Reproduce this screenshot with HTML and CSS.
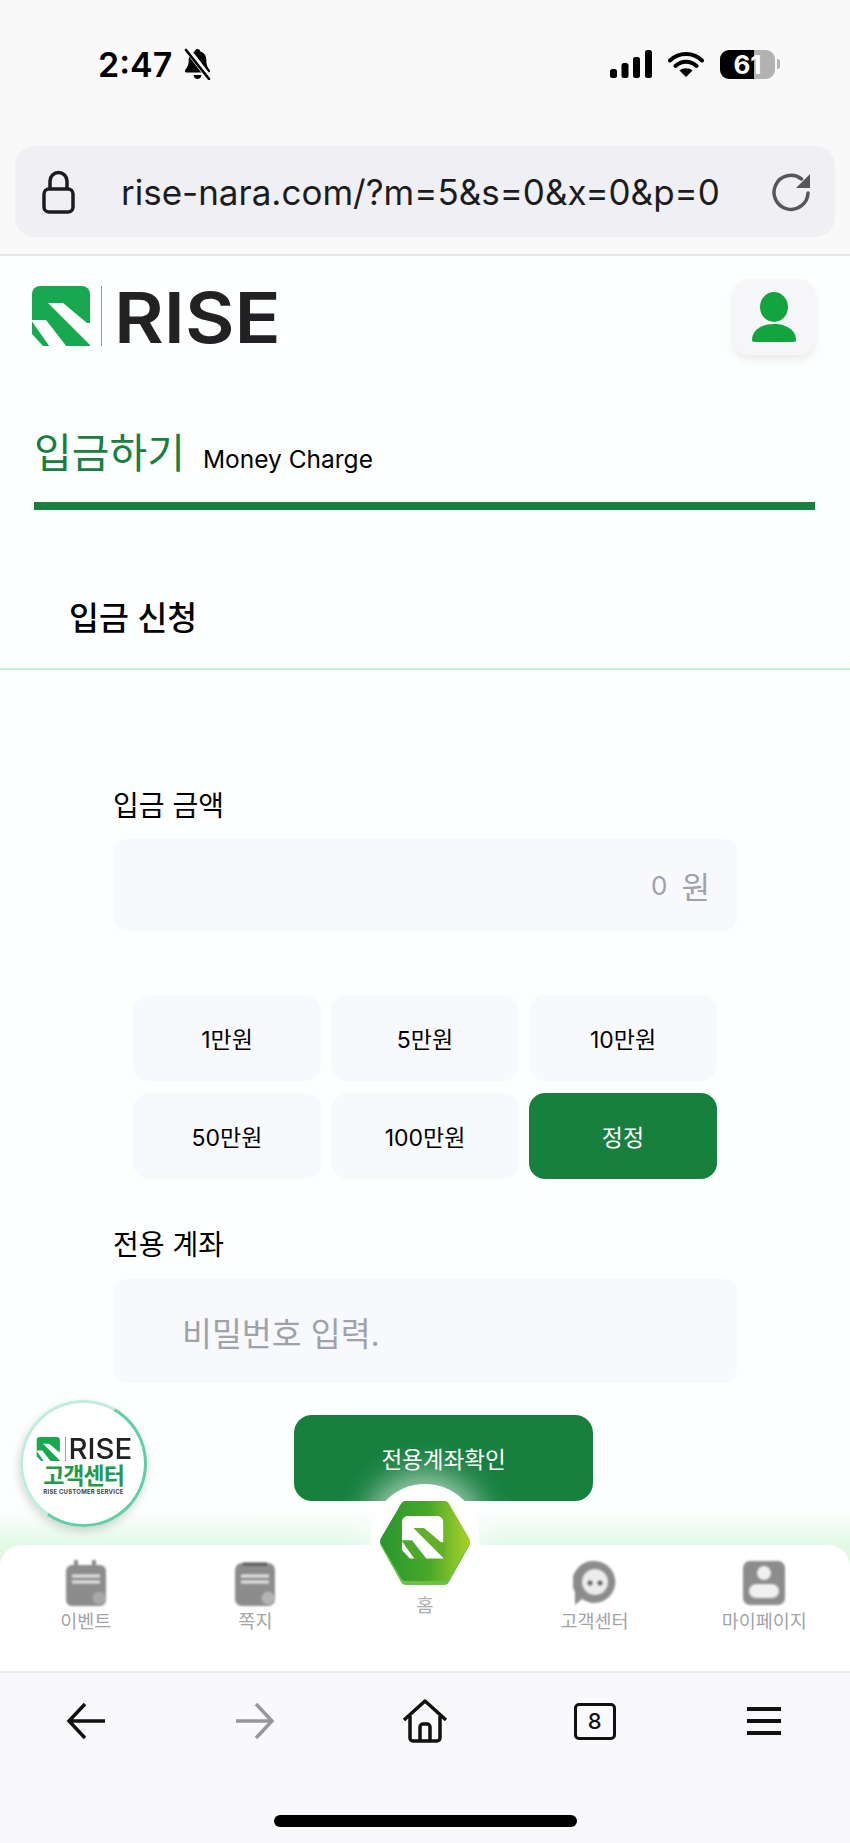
FILE: index.html
```html
<!DOCTYPE html>
<html lang="ko">
<head>
  <meta charset="UTF-8" />
  <meta name="viewport" content="width=device-width, initial-scale=1" />
  <title>입금하기</title>
  <link rel="stylesheet" href="styles.css">
</head>
<body>

  <!-- 브라우저 상단 -->
  <div class="browser-top">
    <div class="status-row">
      <div class="status-left">
        <span class="clock">2:47</span>
        <svg class="bell" width="29" height="32" viewBox="0 0 29 32">
          <path d="M14.5 1c1.6 0 2.6 1 2.8 2.4 4 1.1 6 4.4 6 8.6 0 5.200 1.400 7.500 3.400 10 .9 1.100.3 2.500-1.200 2.500H3.500c-1.500 0-2.100-1.400-1.200-2.500 2-2.500 3.400-4.800 3.400-10 0-4.200 2-7.500 6-8.600C11.900 2 12.900 1 14.500 1z" fill="#000"/>
          <path d="M10.500 27h8c-.3 2.400-2 4-4 4s-3.700-1.600-4-4z" fill="#000"/>
          <path d="M4 1l23 30" stroke="#f9f9fa" stroke-width="6"/>
          <path d="M3 2l23 29" stroke="#000" stroke-width="2.600" stroke-linecap="round"/>
        </svg>
      </div>
      <div class="status-right">
        <svg width="42" height="28" viewBox="0 0 42 28" fill="#000">
          <rect x="0" y="19" width="7" height="9" rx="2.500"/>
          <rect x="11.500" y="13" width="7" height="15" rx="2.500"/>
          <rect x="23" y="7" width="7" height="21" rx="2.500"/>
          <rect x="35" y="0" width="7" height="28" rx="2.500"/>
        </svg>
        <svg width="36" height="26" viewBox="0 0 36 26">
          <path d="M2 9.500c9-8.600 23-8.600 32 0M7.500 15c6-5.600 15-5.600 21 0" fill="none" stroke="#000" stroke-width="4" stroke-linecap="round"/>
          <path d="M18 26l-6.500-6.500c3.600-3 9.400-3 13 0z" fill="#000"/>
        </svg>
        <div class="battery">
          <div class="battery-body"><span class="battery-level">61</span></div>
          <div class="battery-nub"></div>
        </div>
      </div>
    </div>

    <div class="url-bar">
      <svg width="33" height="44" viewBox="0 0 33 44" fill="none" stroke="#1c1c1e" stroke-width="3.500">
        <rect x="2" y="19" width="29" height="23" rx="5"/>
        <path d="M8 19v-8a8.500 8.500 0 0 1 17 0v8"/>
      </svg>
      <span class="url-text">rise-nara.com/?m=5&amp;s=0&amp;x=0&amp;p=0</span>
      <svg width="41" height="41" viewBox="0 0 41 41">
        <path d="M37 22a17 17 0 1 1-6.500-14" fill="none" stroke="#56565a" stroke-width="3.500" stroke-linecap="round"/>
        <path d="M39 3v14H25z" fill="#56565a"/>
      </svg>
    </div>
  </div>

  <!-- 페이지 -->
  <div class="page">
    <header class="site-header">
      <div class="logo">
        <svg class="logo-mark" width="59" height="60" viewBox="0 0 59 60">
          <path d="M8 0H50a8 8 0 0 1 8 8V60H11L0 48V8a8 8 0 0 1 8-8z" fill="#18a84f"/>
          <polygon points="16,17 31,17 55,37 60,37 60,60 59,60" fill="#fff"/>
          <polygon points="-1,34 14,34 35,61 18,61" fill="#fff"/>
        </svg>
        <span class="logo-divider"></span>
        <span class="logo-text">RISE</span>
      </div>
      <div class="profile-btn">
        <svg width="46" height="50" viewBox="0 0 46 50" fill="#12a53f">
          <ellipse cx="23" cy="15" rx="14" ry="15"/>
          <path d="M1 48c0-10 10-16 22-16s22 6 22 16c0 1-1 2-2 2H3c-1 0-2-1-2-2z"/>
        </svg>
      </div>
    </header>

    <div class="page-title">
      <h1>입금하기</h1>
      <span class="page-title-en">Money Charge</span>
    </div>

    <div class="section-head">입금 신청</div>

    <div class="form">
      <div class="form-label">입금 금액</div>
      <div class="amount-input">
        <span class="zero">0</span>
        <span>원</span>
      </div>

      <div class="chips">
        <div class="chip">1만원</div>
        <div class="chip">5만원</div>
        <div class="chip">10만원</div>
        <div class="chip">50만원</div>
        <div class="chip">100만원</div>
        <div class="chip chip-active">정정</div>
      </div>

      <div class="form-label account-label">전용 계좌</div>
      <div class="password-input">비밀번호 입력.</div>

      <div class="confirm-btn">전용계좌확인</div>
    </div>

    <div class="cs-badge">
      <div class="cs-logo">
        <svg width="25" height="24" viewBox="0 0 59 60">
          <path d="M8 0H50a8 8 0 0 1 8 8V60H11L0 48V8a8 8 0 0 1 8-8z" fill="#18a84f"/>
          <polygon points="16,17 31,17 55,37 60,37 60,60 59,60" fill="#fff"/>
          <polygon points="-1,34 14,34 35,61 18,61" fill="#fff"/>
        </svg>
        <span class="cs-divider"></span>
        <span class="cs-rise">RISE</span>
      </div>
      <div class="cs-name">고객센터</div>
      <div class="cs-sub">RISE CUSTOMER SERVICE</div>
    </div>
  </div>

  <!-- 하단 메뉴 -->
  <div class="dock">
    <nav class="nav">
      <div class="nav-item">
        <svg class="nav-icon" width="44" height="46" viewBox="0 0 44 46">
          <path d="M12 0v8M30 0v8" stroke="#8c8c8c" stroke-width="4" stroke-linecap="round"/>
          <rect x="2" y="5" width="40" height="41" rx="6" fill="#8c8c8c"/>
          <path d="M8 16h28M8 22h28" stroke="#e6e6e6" stroke-width="3"/>
          <circle cx="35" cy="38" r="6.500" fill="#a8a8a8"/>
        </svg>
        <span class="nav-label">이벤트</span>
      </div>
      <div class="nav-item">
        <svg class="nav-icon" width="44" height="46" viewBox="0 0 44 46">
          <rect x="2" y="3" width="40" height="43" rx="7" fill="#8c8c8c"/>
          <path d="M10 4h24" stroke="#555" stroke-width="3"/>
          <path d="M8 16h28M8 22h28" stroke="#e6e6e6" stroke-width="3"/>
          <circle cx="35" cy="38" r="6.500" fill="#b4b4b4"/>
        </svg>
        <span class="nav-label">쪽지</span>
      </div>
      <div class="nav-item nav-home">
        <div class="home-bubble">
          <svg width="92" height="88" viewBox="0 0 92 88">
            <defs>
              <linearGradient id="hexFill" x1="0" x2="1" y1="0" y2="0">
                <stop offset="0" stop-color="#27962f"/>
                <stop offset="0.55" stop-color="#4aa82a"/>
                <stop offset="1" stop-color="#aad225"/>
              </linearGradient>
            </defs>
            <path d="M26 2H66a5 5 0 0 1 4 3L90 41a6 6 0 0 1 0 6L70 83a5 5 0 0 1-4 3H26a5 5 0 0 1-4-3L2 47a6 6 0 0 1 0-6L22 5a5 5 0 0 1 4-3z" fill="#6cc04a"/>
            <path d="M26 2H66a5 5 0 0 1 4 3L90 39a6 6 0 0 1 0 6L70 79a5 5 0 0 1-4 3H26a5 5 0 0 1-4-3L2 45a6 6 0 0 1 0-6L22 5a5 5 0 0 1 4-3z" fill="url(#hexFill)"/>
            <g transform="translate(23 17) scale(0.71)">
              <path d="M8 0H50a8 8 0 0 1 8 8V60H11L0 48V8a8 8 0 0 1 8-8z" fill="#fff"/>
              <polygon points="16,17 31,17 55,37 60,37 60,60 59,60" fill="#62b028"/>
              <polygon points="-1,34 14,34 35,61 18,61" fill="#4aa82a"/>
            </g>
          </svg>
        </div>
        <span class="nav-label">홈</span>
      </div>
      <div class="nav-item">
        <svg class="nav-icon" width="44" height="46" viewBox="0 0 44 46">
          <path d="M22 1a21 21 0 1 1-13 38l-7 6v-13A21 21 0 0 1 22 1z" fill="#8c8c8c"/>
          <circle cx="22" cy="22" r="13" fill="#ececec"/>
          <circle cx="17" cy="23" r="2.500" fill="#666"/>
          <circle cx="27" cy="23" r="2.500" fill="#666"/>
        </svg>
        <span class="nav-label">고객센터</span>
      </div>
      <div class="nav-item">
        <svg class="nav-icon" width="44" height="46" viewBox="0 0 44 46">
          <rect x="1" y="1" width="42" height="44" rx="7" fill="#8c8c8c"/>
          <circle cx="22" cy="13" r="7" fill="#f0f0f0"/>
          <rect x="7" y="24" width="30" height="14" rx="7" fill="#f0f0f0"/>
        </svg>
        <span class="nav-label">마이페이지</span>
      </div>
    </nav>
  </div>

  <!-- 브라우저 하단 -->
  <div class="browser-bottom">
    <div class="tool-row">
      <svg width="40" height="40" viewBox="0 0 40 40" fill="none" stroke="#111" stroke-width="3.500">
        <path d="M39 20H3M19 3L3 20l16 17"/>
      </svg>
      <svg width="40" height="40" viewBox="0 0 40 40" fill="none" stroke="#98989c" stroke-width="3.500">
        <path d="M1 20h36M21 3l16 17-16 17"/>
      </svg>
      <svg width="46" height="44" viewBox="0 0 46 44" fill="none" stroke="#111" stroke-width="3.500" stroke-linejoin="round">
        <path d="M2 21L23 2l21 19"/>
        <path d="M8 17v22a3 3 0 0 0 3 3h24a3 3 0 0 0 3-3V17"/>
        <path d="M18 42V28a3 3 0 0 1 3-3h4a3 3 0 0 1 3 3v14"/>
      </svg>
      <div class="tabs-count">8</div>
      <svg width="36" height="30" viewBox="0 0 36 30" fill="#111">
        <rect x="1" y="1" width="34" height="4"/>
        <rect x="1" y="13" width="34" height="4"/>
        <rect x="1" y="25" width="34" height="4"/>
      </svg>
    </div>
    <div class="home-indicator"></div>
  </div>

</body>
</html>
```

FILE: styles.css
```css
* {
  box-sizing: border-box;
}

body {
  margin: 0;
  width: 850px;
  height: 1843px;
  display: flex;
  flex-direction: column;
  overflow: hidden;
  background: #fdfffe;
  color: #000;
  font-family: Inter, "Noto Sans CJK KR", sans-serif;
}

/* browser top */
.browser-top {
  height: 256px;
  background: #f9f9fa;
  border-bottom: 2px solid #e6e6e9;
}

.status-row {
  height: 128px;
  padding: 0 70px 0 98px;
  display: flex;
  align-items: center;
  justify-content: space-between;
}

.status-left {
  display: flex;
  align-items: center;
  gap: 11px;
}

.clock {
  font-size: 34px;
  font-weight: 600;
}

.status-right {
  display: flex;
  align-items: center;
  gap: 16px;
}

.battery {
  display: flex;
  align-items: center;
  gap: 2px;
}

.battery-body {
  width: 55px;
  height: 29px;
  border-radius: 9px;
  background: linear-gradient(90deg, #000 61%, #b2b2b2 61%);
  display: flex;
  align-items: center;
  justify-content: center;
}

.battery-level {
  color: #fff;
  font-size: 26px;
  font-weight: 700;
}

.battery-nub {
  width: 3px;
  height: 10px;
  border-radius: 0 3px 3px 0;
  background: #b2b2b2;
}

.url-bar {
  height: 91px;
  margin: 18px 15px 0;
  padding: 0 23px 0 27px;
  background: #f0f0f4;
  border-radius: 20px;
  display: flex;
  align-items: center;
}

.url-text {
  flex: 1;
  margin-left: 46px;
  font-size: 35px;
  color: #1c1c1e;
}

/* page */
.page {
  position: relative;
  flex: 1;
  min-height: 0;
}

.site-header {
  padding: 23px 35px 0 32px;
  display: flex;
  justify-content: space-between;
  align-items: flex-start;
}

.logo {
  height: 60px;
  margin-top: 7px;
  display: flex;
  align-items: center;
}

.logo-divider {
  width: 1px;
  height: 60px;
  margin: 0 12px 0 10px;
  background: #9a9a9a;
}

.logo-text {
  display: inline-block;
  padding-top: 3px;
  font-size: 70px;
  line-height: 60px;
  font-weight: 600;
  color: #222224;
  transform: scaleX(1.09);
  transform-origin: left center;
}

.profile-btn {
  width: 82px;
  height: 76px;
  background: #f6f6f8;
  border-radius: 16px;
  box-shadow: 0 5px 8px rgba(0, 0, 0, 0.08);
  display: flex;
  align-items: center;
  justify-content: center;
}

.page-title {
  margin: 74px 35px 0 34px;
  padding-bottom: 25px;
  border-bottom: 8px solid #17803f;
  display: flex;
  align-items: baseline;
  gap: 18px;
}

.page-title h1 {
  margin: 0;
  font-size: 41px;
  line-height: 48px;
  font-weight: 400;
  color: #17803f;
}

.page-title-en {
  font-size: 24.500px;
}

.section-head {
  margin-top: 89px;
  padding: 0 0 29px 69px;
  border-bottom: 2px solid #c8f0d4;
  font-size: 32.500px;
  line-height: 40px;
  font-weight: 500;
}

.form {
  width: 624px;
  margin-left: 113px;
  padding-top: 120px;
}

.form-label {
  font-size: 28px;
  line-height: 32px;
}

.amount-input {
  height: 92px;
  margin-top: 17px;
  padding-right: 27px;
  background: #f8f9fd;
  border-radius: 14px;
  color: #a0a2a8;
  font-size: 31px;
  display: flex;
  align-items: center;
  justify-content: flex-end;
  gap: 14px;
}

.zero {
  font-size: 26px;
}

.chips {
  width: 584px;
  margin: 64px 0 0 20px;
  display: grid;
  grid-template-columns: repeat(3, 1fr);
  grid-auto-rows: 86px;
  gap: 12px 10px;
}

.chip {
  background: #f8f9fd;
  border-radius: 16px;
  font-size: 23px;
  display: flex;
  align-items: center;
  justify-content: center;
}

.chip-active {
  background: #17803f;
  color: #fff;
}

.account-label {
  margin-top: 50px;
}

.password-input {
  height: 104px;
  margin-top: 18px;
  padding-left: 69px;
  background: #f8f9fd;
  border-radius: 14px;
  color: #a0a2a8;
  font-size: 32.500px;
  display: flex;
  align-items: center;
}

.confirm-btn {
  width: 299px;
  height: 86px;
  margin: 32px 0 0 181px;
  background: #17803f;
  border-radius: 18px;
  color: #fff;
  font-size: 22.500px;
  display: flex;
  align-items: center;
  justify-content: center;
}

/* floating badge */
.cs-badge {
  position: absolute;
  left: 20px;
  bottom: -17px;
  width: 127px;
  height: 127px;
  border-radius: 50%;
  border: 3px solid transparent;
  background:
    linear-gradient(#fff, #fff) padding-box,
    conic-gradient(#bdeedd 0 30deg, #5ed0a3 30deg 215deg, #bdeedd 215deg 360deg) border-box;
  box-shadow: -1px 4px 10px rgba(0, 0, 0, 0.16);
  display: flex;
  flex-direction: column;
  align-items: center;
  justify-content: center;
}

.cs-logo {
  margin-top: 6px;
  display: flex;
  align-items: center;
  gap: 4px;
}

.cs-divider {
  width: 1px;
  height: 24px;
  background: #999;
}

.cs-rise {
  font-size: 28px;
  line-height: 24px;
  font-weight: 500;
  color: #222224;
  transform: scaleX(1.05);
}

.cs-name {
  margin-top: 3px;
  font-size: 23px;
  line-height: 24px;
  font-weight: 700;
  letter-spacing: -1px;
  color: #1f9a4f;
}

.cs-sub {
  font-size: 6px;
  line-height: 8px;
  font-weight: 700;
  letter-spacing: 0.2px;
  color: #444;
}

/* bottom menu */
.dock {
  padding-top: 35px;
  background: linear-gradient(180deg, rgba(227, 249, 230, 0) 0, #e3f9e6 35px);
}

.nav {
  height: 126px;
  padding: 0 1px;
  background: #fff;
  border-radius: 22px 22px 0 0;
  display: grid;
  grid-template-columns: repeat(5, 1fr);
}

.nav-item {
  padding-top: 15px;
  display: flex;
  flex-direction: column;
  align-items: center;
  gap: 2px;
}

.nav-icon {
  filter: blur(1px);
}

.nav-label {
  font-size: 18.500px;
  line-height: 26px;
  color: #a4a4a8;
}

.nav-home {
  position: relative;
  padding-top: 47px;
}

.home-bubble {
  position: absolute;
  top: -61px;
  left: 50%;
  width: 108px;
  height: 108px;
  margin-left: -54px;
  padding-top: 15px;
  background: #fff;
  border-radius: 50%;
  box-shadow: 0 -6px 30px 6px rgba(255, 255, 255, 0.6);
  display: flex;
  justify-content: center;
}

/* browser bottom */
.browser-bottom {
  height: 172px;
  background: #f9f8fb;
  border-top: 2px solid #ebebed;
  display: flex;
  flex-direction: column;
  align-items: center;
}

.tool-row {
  width: 100%;
  padding: 0 1px;
  margin-top: 26px;
  display: grid;
  grid-template-columns: repeat(5, 1fr);
  justify-items: center;
  align-items: center;
}

.tabs-count {
  width: 42px;
  height: 37px;
  border: 3.500px solid #111;
  border-radius: 5px;
  font-size: 22px;
  font-weight: 500;
  color: #111;
  display: flex;
  align-items: center;
  justify-content: center;
}

.home-indicator {
  width: 303px;
  height: 12px;
  margin-top: auto;
  margin-bottom: 16px;
  border-radius: 6px;
  background: #000;
}
```
